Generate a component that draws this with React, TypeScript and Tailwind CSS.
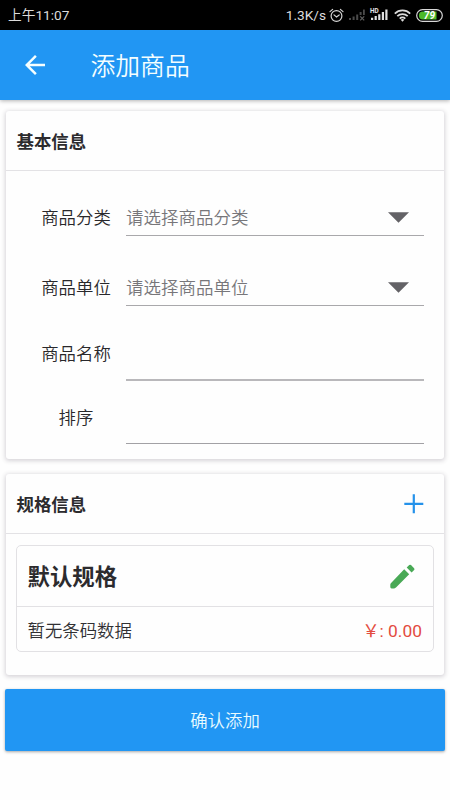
import type { ReactNode } from "react"
import { MdArrowBack } from "react-icons/md"

const FONT = "font-[Roboto,'Noto_Sans_CJK_SC',sans-serif]"

const SELECT_FIELDS = [
  { label: "商品分类", placeholder: "请选择商品分类" },
  { label: "商品单位", placeholder: "请选择商品单位" },
]

function AlarmIcon() {
  return (
    <svg className="h-[15px] w-[15px]" viewBox="0 0 15 15" fill="none" stroke="#d4d4d4" strokeWidth="1.2" strokeLinecap="round">
      <circle cx="7.5" cy="8" r="5.4" />
      <path d="M1 3.6 3.6 1.4M14 3.6 11.4 1.4M5 6.9l2.5 2 2.7-2" />
    </svg>
  )
}

function NoSignalIcon() {
  return (
    <svg className="h-[14px] w-[17px]" viewBox="0 0 17 14">
      <path d="M0 10h2v2H0zM3.6 8.5h2V12h-2zM7.2 6.5h2V12h-2zM10.6 4h2v3h-2zM14 1.5h1.8V7H14z" fill="#4b4b4b" />
      <path d="m11.2 8.3 4 4m0-4-4 4" stroke="#5f5f5f" strokeWidth="1.2" />
    </svg>
  )
}

function HdSignalIcon() {
  return (
    <svg className="h-[14px] w-[17px] overflow-visible" viewBox="0 0 17 14">
      <text x="-1" y="5" fontSize="6.4" fontWeight="700" fill="#e5e5e5">HD</text>
      <path d="M0 9.7h2.2V12H0zM3.6 8h2.2v4H3.6zM7.2 6.2h2.2V12H7.2zM10.8 4H13v8h-2.2zM14.3 1.5h2.2V12h-2.2z" fill="#e2e2e2" />
    </svg>
  )
}

function WifiIcon() {
  return (
    <svg className="h-[13px] w-[17px]" viewBox="0 0 17 13" fill="none" stroke="#dcdcdc" strokeWidth="1.7">
      <path d="M.8 4.6a11 11 0 0 1 15.4 0M3.3 7.2a7.4 7.4 0 0 1 10.4 0M5.7 9.6a4 4 0 0 1 5.6 0" />
      <path d="M8.5 12.8 6.7 10.8a2.6 2.6 0 0 1 3.6 0z" fill="#dcdcdc" stroke="none" />
    </svg>
  )
}

function BatteryIcon() {
  return (
    <svg className="h-[13px] w-[27px]" viewBox="0 0 27 13">
      <rect x=".7" y=".7" width="25.6" height="11.6" rx="5.8" fill="#000" stroke="#d8d8d8" strokeWidth="1.2" />
      <path d="M7 2.4h13.5v8.2H7a4.1 4.1 0 0 1 0-8.2z" fill="#4bb929" />
      <text x="13.4" y="10.3" fontSize="10" fontWeight="700" fontStyle="italic" textAnchor="middle" fill="#fff">79</text>
    </svg>
  )
}

function PencilIcon() {
  return (
    <svg className="h-[25px] w-[25px]" viewBox="0 0 25 25" fill="#49a956">
      <path d="M14.2 5.3 19.2 10.3 6 23.6q-.8.8-1.8.8H1.6Q.3 24.4.3 23.1V20.7q0-1 .8-1.8zM16.7 3.6 19.2 1.1q.9-.9 1.8 0l3.1 3.1q.9.9 0 1.8L21.6 8.5z" />
    </svg>
  )
}

function StatusBar() {
  return (
    <div className="flex h-[30px] items-center justify-between bg-black pr-[7px] pl-[8px] text-[#dcdcdc]">
      <span className="text-[13.7px] leading-[30px]">上午11:07</span>
      <div className="flex items-center">
        <span className="mr-[3px] text-[13.7px] leading-[30px]">1.3K/s</span>
        <AlarmIcon />
        <span className="ml-[5px]"><NoSignalIcon /></span>
        <span className="ml-[5px]"><HdSignalIcon /></span>
        <span className="ml-[6px]"><WifiIcon /></span>
        <span className="ml-[5px]"><BatteryIcon /></span>
      </div>
    </div>
  )
}

function Card({ title, action, className, children }: { title: string; action?: ReactNode; className: string; children: ReactNode }) {
  return (
    <section className={`mx-[6px] rounded-[3px] bg-[#fefefe] shadow-[0_1px_4px_1px_rgba(60,50,70,0.2)] ${className}`}>
      <div className="flex h-[60px] items-center justify-between border-b border-[#e3e2e5] pr-[20px] pl-[10.5px]">
        <h2 className="pt-[2px] text-[17.4px] leading-6 font-bold text-[#2c2b2e]">{title}</h2>
        {action}
      </div>
      {children}
    </section>
  )
}

function FieldLabel({ children }: { children: string }) {
  return <label className="w-[90px] shrink-0 pl-[20px] text-center text-[17.4px] leading-6 font-[350] text-[#29282b]">{children}</label>
}

export default function App() {
  return (
    <div className={`flex h-[800px] w-[450px] flex-col overflow-hidden bg-[#fefefe] ${FONT}`}>
      <StatusBar />

      <header className="relative flex h-[70px] shrink-0 items-center bg-[#2196f3] pl-[20px] text-[#f4feff] shadow-[0_1px_4px_rgba(0,0,0,0.3)]">
        <MdArrowBack className="h-[30px] w-[30px]" />
        <h1 className="ml-[40.5px] pt-[4px] text-[24.8px] leading-[30px] font-[350]">添加商品</h1>
      </header>

      <Card title="基本信息" className="mt-[11px] h-[348px]">
        <div className="flex flex-col pr-[20px] pl-[15px]">
          {SELECT_FIELDS.map((field, i) => (
            <div key={field.label} className={`flex items-end ${i === 0 ? "h-[65px]" : "h-[70px]"}`}>
              <div className="flex h-[36px] items-center">
                <FieldLabel>{field.label}</FieldLabel>
              </div>
              <div className="ml-[15px] flex h-[37px] flex-1 items-center justify-between border-b border-[#a9a8ab] pr-[15px]">
                <span className="pt-[1px] text-[17.5px] leading-6 font-[350] text-[#77767a]">{field.placeholder}</span>
                <svg className="h-[11px] w-[21px]" viewBox="0 0 21 11">
                  <path d="M0 .3h21L10.5 10.8z" fill="#636266" />
                </svg>
              </div>
            </div>
          ))}
          <div className="flex h-[75px] items-end">
            <div className="flex h-[39px] items-start">
              <FieldLabel>商品名称</FieldLabel>
            </div>
            <input className="ml-[15px] h-[40px] min-w-0 flex-1 border-b-2 border-[#b9b8bb] bg-transparent text-[17.5px] outline-none" />
          </div>
          <div className="flex h-[63px] items-end">
            <div className="flex h-[38px] items-start">
              <FieldLabel>排序</FieldLabel>
            </div>
            <input className="ml-[15px] h-[40px] min-w-0 flex-1 border-b border-[#a2a1a5] bg-transparent text-[17.5px] outline-none" />
          </div>
        </div>
      </Card>

      <Card
        title="规格信息"
        className="mt-[15px] h-[201px]"
        action={
          <svg className="h-5 w-5" viewBox="0 0 20 20" stroke="#2592ea" strokeWidth="2.2">
            <path d="M9.8 .3v19M.3 9.8h19" />
          </svg>
        }
      >
        <div className="mx-[10px] mt-[11px] h-[107px] rounded-[5px] border border-[#e2e1e4]">
          <div className="flex h-[61px] items-center justify-between border-b border-[#e2e1e4] pr-[18px] pl-[10.5px]">
            <h3 className="pt-[2px] text-[22.4px] leading-8 font-bold text-[#2c2b2e]">默认规格</h3>
            <PencilIcon />
          </div>
          <div className="flex h-[45px] items-center justify-between pt-[2px] pr-[11px] pl-[10.5px] text-[17.4px] leading-6">
            <span className="font-[350] text-[#303033]">暂无条码数据</span>
            <span className="text-[#e34b3f]">￥: 0.00</span>
          </div>
        </div>
      </Card>

      <button
        type="button"
        className="mx-[5px] mt-[14px] h-[62px] shrink-0 rounded-[2px] bg-[#2196f3] pt-[2px] text-[17.4px] font-[350] text-[#e9fbff] shadow-[0_1px_3px_rgba(0,0,0,0.35)]"
      >
        确认添加
      </button>
    </div>
  )
}
